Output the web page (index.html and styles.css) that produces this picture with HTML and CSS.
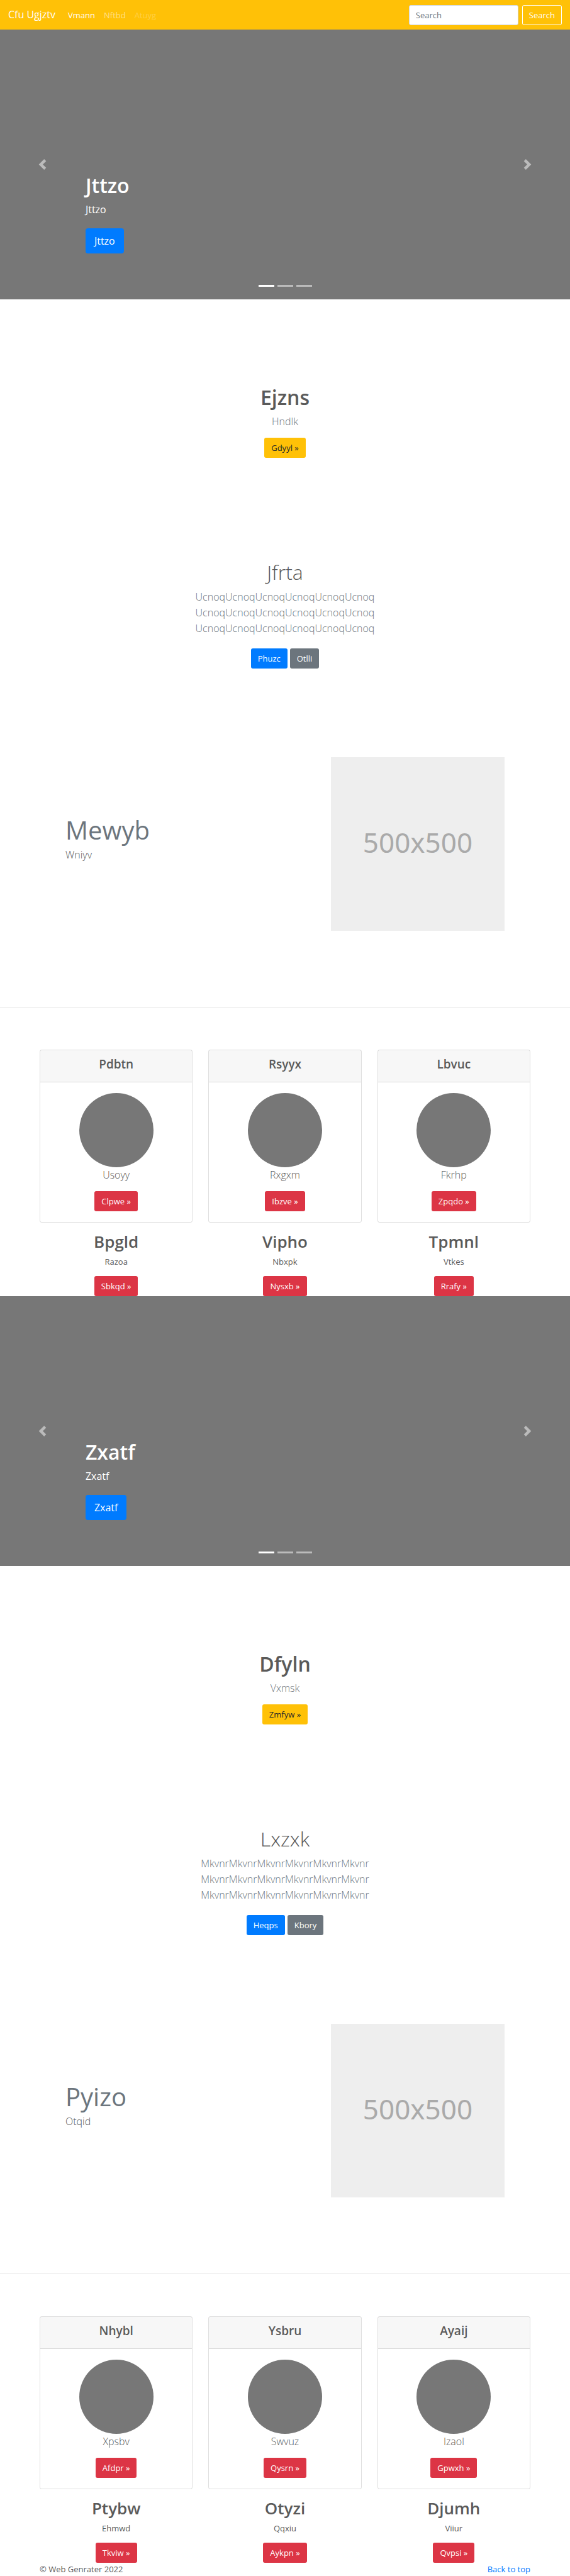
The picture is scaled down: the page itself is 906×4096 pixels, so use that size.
FILE: index.html
```html
<!DOCTYPE html>
<html lang="en">
<head>
<meta charset="utf-8">
<meta name="viewport" content="width=device-width, initial-scale=1">
<title>Cfu Ugjztv</title>
<link rel="stylesheet" href="styles.css">
</head>
<body>
<header class="navbar" id="top">
  <a class="brand" href="#">Cfu Ugjztv</a>
  <nav class="nav">
    <a class="nav-link active" href="#">Vmann</a>
    <a class="nav-link" href="#">Nftbd</a>
    <a class="nav-link disabled" href="#">Atuyg</a>
  </nav>
  <form class="search">
    <input class="search-input" type="text" placeholder="Search" aria-label="Search">
    <button class="btn btn-outline" type="button">Search</button>
  </form>
</header>
<main>
  <section class="carousel">
    <button class="arrow" type="button" aria-label="Previous"><svg viewBox="0 0 8 8" aria-hidden="true"><path d="M5.250 0l-4 4 4 4 1.500-1.500-2.500-2.500 2.500-2.500-1.500-1.500z"/></svg></button>
    <div class="caption">
      <h1>Jttzo</h1>
      <p>Jttzo</p>
      <a class="btn btn-primary btn-lg" href="#">Jttzo</a>
    </div>
    <button class="arrow" type="button" aria-label="Next"><svg viewBox="0 0 8 8" aria-hidden="true"><path d="M2.750 0l-1.500 1.500 2.500 2.500-2.500 2.500 1.500 1.500 4-4-4-4z"/></svg></button>
    <div class="indicators"><span class="current"></span><span></span><span></span></div>
  </section>

  <section class="intro">
    <h2 class="title strong">Ejzns</h2>
    <p class="lead">Hndlk</p>
    <div class="actions"><a class="btn btn-warning" href="#">Gdyyl »</a></div>
  </section>

  <section class="album">
    <h2 class="title light">Jfrta</h2>
    <p class="lead">UcnoqUcnoqUcnoqUcnoqUcnoqUcnoq<br>UcnoqUcnoqUcnoqUcnoqUcnoqUcnoq<br>UcnoqUcnoqUcnoqUcnoqUcnoqUcnoq</p>
    <div class="actions"><a class="btn btn-primary" href="#">Phuzc</a><a class="btn btn-secondary" href="#">Otlli</a></div>
  </section>

  <section class="featurette">
    <div class="featurette-text">
      <h2>Mewyb</h2>
      <p class="lead">Wniyv</p>
    </div>
    <div class="placeholder">500x500</div>
  </section>

  <hr class="divider">

  <section class="columns">
    <div class="column">
      <article class="card">
        <h3 class="card-header">Pdbtn</h3>
        <div class="card-body"><div class="circle"></div><p class="lead">Usoyy</p><a class="btn btn-danger" href="#">Clpwe »</a></div>
      </article>
      <h2>Bpgld</h2>
      <p class="note">Razoa</p>
      <a class="btn btn-danger" href="#">Sbkqd »</a>
    </div>
    <div class="column">
      <article class="card">
        <h3 class="card-header">Rsyyx</h3>
        <div class="card-body"><div class="circle"></div><p class="lead">Rxgxm</p><a class="btn btn-danger" href="#">Ibzve »</a></div>
      </article>
      <h2>Vipho</h2>
      <p class="note">Nbxpk</p>
      <a class="btn btn-danger" href="#">Nysxb »</a>
    </div>
    <div class="column">
      <article class="card">
        <h3 class="card-header">Lbvuc</h3>
        <div class="card-body"><div class="circle"></div><p class="lead">Fkrhp</p><a class="btn btn-danger" href="#">Zpqdo »</a></div>
      </article>
      <h2>Tpmnl</h2>
      <p class="note">Vtkes</p>
      <a class="btn btn-danger" href="#">Rrafy »</a>
    </div>
  </section>

  <section class="carousel">
    <button class="arrow" type="button" aria-label="Previous"><svg viewBox="0 0 8 8" aria-hidden="true"><path d="M5.250 0l-4 4 4 4 1.500-1.500-2.500-2.500 2.500-2.500-1.500-1.500z"/></svg></button>
    <div class="caption">
      <h1>Zxatf</h1>
      <p>Zxatf</p>
      <a class="btn btn-primary btn-lg" href="#">Zxatf</a>
    </div>
    <button class="arrow" type="button" aria-label="Next"><svg viewBox="0 0 8 8" aria-hidden="true"><path d="M2.750 0l-1.500 1.500 2.500 2.500-2.500 2.500 1.500 1.500 4-4-4-4z"/></svg></button>
    <div class="indicators"><span class="current"></span><span></span><span></span></div>
  </section>

  <section class="intro">
    <h2 class="title strong">Dfyln</h2>
    <p class="lead">Vxmsk</p>
    <div class="actions"><a class="btn btn-warning" href="#">Zmfyw »</a></div>
  </section>

  <section class="album">
    <h2 class="title light">Lxzxk</h2>
    <p class="lead">MkvnrMkvnrMkvnrMkvnrMkvnrMkvnr<br>MkvnrMkvnrMkvnrMkvnrMkvnrMkvnr<br>MkvnrMkvnrMkvnrMkvnrMkvnrMkvnr</p>
    <div class="actions"><a class="btn btn-primary" href="#">Heqps</a><a class="btn btn-secondary" href="#">Kbory</a></div>
  </section>

  <section class="featurette">
    <div class="featurette-text">
      <h2>Pyizo</h2>
      <p class="lead">Otqid</p>
    </div>
    <div class="placeholder">500x500</div>
  </section>

  <hr class="divider">

  <section class="columns">
    <div class="column">
      <article class="card">
        <h3 class="card-header">Nhybl</h3>
        <div class="card-body"><div class="circle"></div><p class="lead">Xpsbv</p><a class="btn btn-danger" href="#">Afdpr »</a></div>
      </article>
      <h2>Ptybw</h2>
      <p class="note">Ehmwd</p>
      <a class="btn btn-danger" href="#">Tkviw »</a>
    </div>
    <div class="column">
      <article class="card">
        <h3 class="card-header">Ysbru</h3>
        <div class="card-body"><div class="circle"></div><p class="lead">Swvuz</p><a class="btn btn-danger" href="#">Qysrn »</a></div>
      </article>
      <h2>Otyzi</h2>
      <p class="note">Qqxiu</p>
      <a class="btn btn-danger" href="#">Aykpn »</a>
    </div>
    <div class="column">
      <article class="card">
        <h3 class="card-header">Ayaij</h3>
        <div class="card-body"><div class="circle"></div><p class="lead">Izaol</p><a class="btn btn-danger" href="#">Gpwxh »</a></div>
      </article>
      <h2>Djumh</h2>
      <p class="note">Viiur</p>
      <a class="btn btn-danger" href="#">Qvpsi »</a>
    </div>
  </section>
</main>
<footer class="footer">
  <span>© Web Genrater 2022</span>
  <a href="#top">Back to top</a>
</footer>
</body>
</html>
```
FILE: styles.css
```css
*, *::before, *::after { box-sizing: border-box; }

body {
  margin: 0;
  background: #fff;
  color: #5a5a5a;
  font-family: "Open Sans", "Noto Sans", sans-serif;
  font-size: 13px;
  line-height: 20px;
}

h1, h2, h3, p { margin: 0; }
a { color: #007bff; text-decoration: none; }

/* Navbar */
.navbar {
  display: flex;
  align-items: center;
  height: 47px;
  padding: 0 13px;
  background: #ffc107;
}
.brand { margin-right: 20px; color: #fff; font-size: 16px; line-height: 25px; }
.nav { display: flex; gap: 14px; }
.nav-link { color: rgba(255, 255, 255, .5); }
.nav-link.active { color: #fff; }
.nav-link.disabled { color: rgba(255, 255, 255, .25); }
.search { display: flex; gap: 6px; margin-left: auto; }
.search-input {
  width: 174px;
  height: 32px;
  padding: 5px 10px;
  border: 1px solid #ced4da;
  border-radius: 3px;
  background: #fff;
  color: #495057;
  font: inherit;
}
.search-input::placeholder { color: #6c757d; opacity: 1; }

/* Buttons */
.btn {
  display: inline-block;
  padding: 5px 10px;
  border: 1px solid transparent;
  border-radius: 3px;
  color: #fff;
  font: inherit;
  text-align: center;
}
.btn-outline { border-color: #fff; background: transparent; }
.btn-primary { background: #007bff; }
.btn-secondary { background: #6c757d; }
.btn-warning { background: #ffc107; color: #212529; }
.btn-danger { background: #dc3545; }
.btn-lg { padding: 7px 13px; border-radius: 4px; font-size: 16px; font-weight: 500; line-height: 24px; }

/* Carousel */
.carousel {
  position: relative;
  display: grid;
  grid-template-columns: 15% 1fr 15%;
  height: 429px;
  background: #777;
  color: #fff;
}
.arrow {
  display: flex;
  align-items: center;
  justify-content: center;
  padding: 0;
  border: 0;
  background: none;
  opacity: .5;
}
.arrow svg { width: 17px; height: 17px; fill: #fff; }
.caption { align-self: end; padding-bottom: 73px; }
.caption h1 { font-size: 32px; font-weight: 600; line-height: 40px; }
.caption p { margin: 6px 0 17px; font-size: 16px; font-weight: 500; line-height: 25px; }
.caption .btn { display: table; }
.indicators {
  position: absolute;
  right: 0;
  bottom: 20px;
  left: 0;
  display: flex;
  justify-content: center;
  gap: 5px;
}
.indicators span { width: 25px; height: 3px; background: #fff; opacity: .5; }
.indicators .current { opacity: 1; }

/* Centred text sections */
.intro, .album { text-align: center; }
.intro { padding: 136px 13px 0; }
.album { padding: 162px 13px 0; }
.title { font-size: 32px; line-height: 40px; }
.strong { font-weight: 600; }
.light { font-weight: 300; }
.lead { font-size: 16px; font-weight: 300; line-height: 25px; }
.intro .lead { margin-top: 6px; color: #6c757d; }
.album .lead { margin-top: 7px; color: #6c757d; }
.actions { display: flex; justify-content: center; gap: 4px; margin-top: 13px; }
.album .actions { margin-top: 19px; }

/* Featurette */
.featurette {
  display: flex;
  align-items: center;
  justify-content: space-between;
  max-width: 698px;
  margin: 141px auto 121px;
}
.featurette-text { padding-bottom: 17px; }
.featurette h2 { color: #6c757d; font-size: 40px; font-weight: 400; line-height: 50px; }
.featurette .lead { margin-top: 2px; }
.placeholder {
  display: flex;
  align-items: center;
  justify-content: center;
  width: 276px;
  aspect-ratio: 1;
  padding-bottom: 6px;
  background: #eee;
  color: #aaa;
  font-family: "Noto Sans", sans-serif;
  font-size: 44px;
}
.divider { margin: 0; border: 0; border-top: 1px solid rgba(0, 0, 0, .1); }

/* Three columns */
.columns {
  display: grid;
  grid-template-columns: repeat(3, 1fr);
  gap: 25px;
  max-width: 780px;
  margin: 67px auto 0;
}
.column { display: flex; flex-direction: column; align-items: center; text-align: center; }
.column h2 { margin-top: 14px; font-size: 26px; font-weight: 600; line-height: 32px; }
.note { margin: 6px 0 13px; }
.card { align-self: stretch; border: 1px solid rgba(0, 0, 0, .125); border-radius: 3px; }
.card-header {
  padding: 9px 17px 14px;
  border-bottom: 1px solid rgba(0, 0, 0, .125);
  background: rgba(0, 0, 0, .03);
  font-size: 19px;
  font-weight: 600;
  line-height: 27px;
}
.card-body { display: flex; flex-direction: column; align-items: center; padding: 17px; }
.circle { width: 118px; height: 118px; border-radius: 50%; background: #777; }
.card .lead { margin-bottom: 13px; }

/* Footer */
.footer { display: flex; justify-content: space-between; max-width: 780px; margin: 0 auto; }
```
